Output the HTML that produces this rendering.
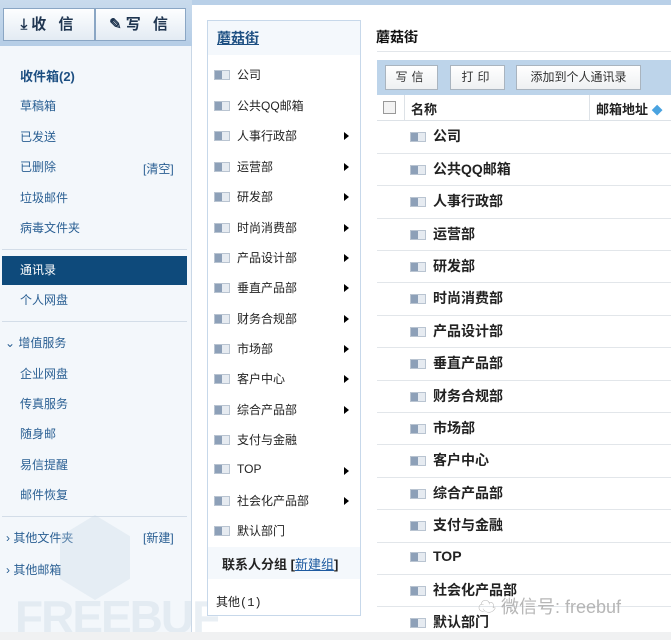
<!DOCTYPE html><html><head><meta charset="utf-8"><style>
*{margin:0;padding:0;box-sizing:border-box}
body{width:671px;height:640px;overflow:hidden;background:#fff;font-family:"Liberation Sans","Noto Sans CJK SC",sans-serif;position:relative;font-size:12px}
.a{position:absolute;white-space:nowrap}
#left{position:absolute;left:0;top:0;width:192px;height:640px;background:#f3f7fb;border-right:1px solid #c9d7e6}
#hdr{position:absolute;left:0;top:0;width:192px;height:46px;background:linear-gradient(#c9dbed,#b5cde6)}
.btn{position:absolute;top:8px;height:33px;background:linear-gradient(#fdfeff,#e3ebf3);border:1px solid #8aa6c4;font-size:15px;font-weight:bold;color:#1f3550;line-height:31px;text-align:center;letter-spacing:4px}
.l{position:absolute;left:20px;font-size:12px;color:#2a5f93}
.sep{position:absolute;left:2px;width:185px;height:1px;background:#d3dde8}
#mid{position:absolute;left:207px;top:20px;width:154px;height:596px;border:1px solid #c7d8ea;background:#fff}
.m{position:absolute;left:6px;font-size:12px;color:#222}
.ic{display:inline-block;width:16px;height:10px;background:linear-gradient(90deg,#8da0b8 0 7px,#e6ebf1 7px);border:1px solid #b9c4d1;vertical-align:-1px;margin-right:7px}
.tri{position:absolute;left:136px;width:0;height:0;border-left:5px solid #000;border-top:4px solid transparent;border-bottom:4px solid transparent}
.r{position:absolute;left:377px;width:294px;height:1px;background:#e2e6ea}
.rt{position:absolute;left:410px;font-size:14px;font-weight:bold;color:#222}
.tb{position:absolute;top:65px;height:25px;background:linear-gradient(#fff,#eef0f2);border:1px solid #a9b4bf;font-size:12px;line-height:23px;text-align:center;color:#333}
</style></head><body>
<div class="a" style="left:192px;top:0;width:479px;height:5px;background:#b9d0e8"></div>
<div id="left">
<div id="hdr"></div>
<div class="btn" style="left:3px;width:92px">⤓收 信</div>
<div class="btn" style="left:95px;width:91px">✎写 信</div>
<div class="l a" style="top:66px;font-weight:bold;font-size:13px;color:#1d4f82">收件箱(2)</div>
<div class="l a" style="top:97px">草稿箱</div>
<div class="l a" style="top:128px">已发送</div>
<div class="l a" style="top:158px">已删除</div><div class="l a" style="left:143px;top:160px">[清空]</div>
<div class="l a" style="top:189px">垃圾邮件</div>
<div class="l a" style="top:219px">病毒文件夹</div>
<div class="sep" style="top:249px"></div>
<div class="a" style="left:2px;top:256px;width:185px;height:29px;background:#0e4a7b"></div>
<div class="l a" style="top:261px;color:#fff">通讯录</div>
<div class="l a" style="top:291px">个人网盘</div>
<div class="sep" style="top:321px"></div>
<div class="l a" style="left:5px;top:334px">⌄ 增值服务</div>
<div class="l a" style="top:365px">企业网盘</div>
<div class="l a" style="top:395px">传真服务</div>
<div class="l a" style="top:425px">随身邮</div>
<div class="l a" style="top:456px">易信提醒</div>
<div class="l a" style="top:486px">邮件恢复</div>
<div class="sep" style="top:516px"></div>
<div class="l a" style="left:6px;top:529px">› 其他文件夹</div><div class="l a" style="left:143px;top:529px">[新建]</div>
<div class="l a" style="left:6px;top:561px">› 其他邮箱</div>
<div class="a" style="left:60px;top:515px;width:70px;height:85px;background:#c8d8e6;opacity:.3;clip-path:polygon(50% 0,100% 25%,100% 75%,50% 100%,0 75%,0 25%)"></div>
<div class="a" style="left:15px;top:590px;font-size:46px;font-weight:bold;color:#d5e0ea;opacity:.5;letter-spacing:-2px">FREEBUF</div>
</div>
<div id="mid">
<div class="a" style="left:0;top:0;width:152px;height:34px;background:#f4f8fc"></div>
<div class="a" style="left:9px;top:7px;font-size:14px;font-weight:bold;color:#1d4f82;text-decoration:underline">蘑菇街</div>
<div class="m a" style="top:45px"><span class="ic"></span>公司</div>
<div class="m a" style="top:76px"><span class="ic"></span>公共QQ邮箱</div>
<div class="m a" style="top:106px"><span class="ic"></span>人事行政部</div><div class="tri" style="top:111px"></div>
<div class="m a" style="top:137px"><span class="ic"></span>运营部</div><div class="tri" style="top:142px"></div>
<div class="m a" style="top:167px"><span class="ic"></span>研发部</div><div class="tri" style="top:172px"></div>
<div class="m a" style="top:198px"><span class="ic"></span>时尚消费部</div><div class="tri" style="top:203px"></div>
<div class="m a" style="top:228px"><span class="ic"></span>产品设计部</div><div class="tri" style="top:233px"></div>
<div class="m a" style="top:258px"><span class="ic"></span>垂直产品部</div><div class="tri" style="top:263px"></div>
<div class="m a" style="top:289px"><span class="ic"></span>财务合规部</div><div class="tri" style="top:294px"></div>
<div class="m a" style="top:319px"><span class="ic"></span>市场部</div><div class="tri" style="top:324px"></div>
<div class="m a" style="top:349px"><span class="ic"></span>客户中心</div><div class="tri" style="top:354px"></div>
<div class="m a" style="top:380px"><span class="ic"></span>综合产品部</div><div class="tri" style="top:385px"></div>
<div class="m a" style="top:410px"><span class="ic"></span>支付与金融</div>
<div class="m a" style="top:441px"><span class="ic"></span>TOP</div><div class="tri" style="top:446px"></div>
<div class="m a" style="top:471px"><span class="ic"></span>社会化产品部</div><div class="tri" style="top:476px"></div>
<div class="m a" style="top:501px"><span class="ic"></span>默认部门</div>
<div class="a" style="left:0;top:526px;width:152px;height:32px;background:#f4f8fc"></div>
<div class="a" style="left:14px;top:533px;font-size:13px;font-weight:bold;color:#222">联系人分组 [<span style="color:#1d5aa0;text-decoration:underline;font-weight:normal">新建组</span>]</div>
<div class="m a" style="left:8px;top:572px;font-family:'Liberation Mono','Noto Sans CJK SC',monospace">其他(1)</div>
</div>
<div class="a" style="left:376px;top:27px;font-size:14px;font-weight:bold;color:#111">蘑菇街</div>
<div class="r" style="top:51px"></div>
<div class="a" style="left:377px;top:60px;width:294px;height:35px;background:#bdd4ea"></div>
<div class="tb" style="left:385px;width:53px;letter-spacing:4px">写信</div>
<div class="tb" style="left:450px;width:55px;letter-spacing:4px">打印</div>
<div class="tb" style="left:516px;width:125px">添加到个人通讯录</div>
<div class="a" style="left:377px;top:95px;width:294px;height:26px;background:#fff;border-bottom:1px solid #dde2e7"></div>
<div class="a" style="left:383px;top:101px;width:13px;height:13px;border:1px solid #999;background:#f3f3f3"></div>
<div class="a" style="left:404px;top:95px;width:1px;height:26px;background:#dde2e7"></div>
<div class="a" style="left:589px;top:95px;width:1px;height:26px;background:#dde2e7"></div>
<div class="a" style="left:411px;top:99px;font-size:13px;font-weight:bold;color:#222">名称</div>
<div class="a" style="left:596px;top:99px;font-size:13px;font-weight:bold;color:#222">邮箱地址 <span style="color:#4aa3e0;font-size:11px">◆</span></div>
<div class="rt a" style="top:126px"><span class="ic"></span>公司</div><div class="r" style="top:153px"></div>
<div class="rt a" style="top:159px"><span class="ic"></span>公共QQ邮箱</div><div class="r" style="top:185px"></div>
<div class="rt a" style="top:191px"><span class="ic"></span>人事行政部</div><div class="r" style="top:218px"></div>
<div class="rt a" style="top:224px"><span class="ic"></span>运营部</div><div class="r" style="top:250px"></div>
<div class="rt a" style="top:256px"><span class="ic"></span>研发部</div><div class="r" style="top:282px"></div>
<div class="rt a" style="top:288px"><span class="ic"></span>时尚消费部</div><div class="r" style="top:315px"></div>
<div class="rt a" style="top:321px"><span class="ic"></span>产品设计部</div><div class="r" style="top:347px"></div>
<div class="rt a" style="top:353px"><span class="ic"></span>垂直产品部</div><div class="r" style="top:380px"></div>
<div class="rt a" style="top:386px"><span class="ic"></span>财务合规部</div><div class="r" style="top:412px"></div>
<div class="rt a" style="top:418px"><span class="ic"></span>市场部</div><div class="r" style="top:444px"></div>
<div class="rt a" style="top:450px"><span class="ic"></span>客户中心</div><div class="r" style="top:477px"></div>
<div class="rt a" style="top:483px"><span class="ic"></span>综合产品部</div><div class="r" style="top:509px"></div>
<div class="rt a" style="top:515px"><span class="ic"></span>支付与金融</div><div class="r" style="top:542px"></div>
<div class="rt a" style="top:548px"><span class="ic"></span>TOP</div><div class="r" style="top:574px"></div>
<div class="rt a" style="top:580px"><span class="ic"></span>社会化产品部</div><div class="r" style="top:606px"></div>
<div class="rt a" style="top:612px"><span class="ic"></span>默认部门</div>
<div class="a" style="left:478px;top:593px;font-size:18px;color:#aaa;opacity:.85">☁ 微信号: freebuf</div>
<div class="a" style="left:0;top:632px;width:671px;height:8px;background:#f0f1f2"></div>
</body></html>
